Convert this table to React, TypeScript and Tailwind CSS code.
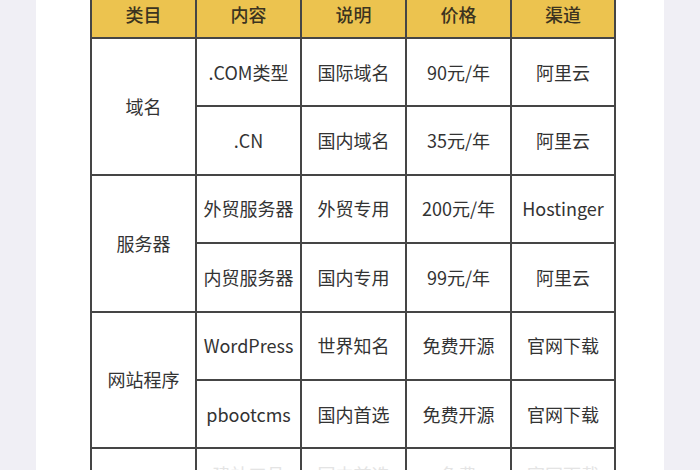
import React from "react";

const font = { fontFamily: '"Noto Sans CJK SC", "Noto Sans", sans-serif' };

function Cell({ children, className = "" }: { children?: React.ReactNode; className?: string }) {
  return (
    <div className={`bg-white flex items-center justify-center text-[18px] text-[#333] ${className}`}>
      {children}
    </div>
  );
}

function Head({ children }: { children: React.ReactNode }) {
  return (
    <div className="bg-[#ecc34f] flex items-center justify-center text-[18px] font-medium text-[#3b3320] h-[37px] pb-[8px]">
      {children}
    </div>
  );
}

export default function App() {
  const rows: [string, string, string, string][] = [
    [".COM类型", "国际域名", "90元/年", "阿里云"],
    [".CN", "国内域名", "35元/年", "阿里云"],
    ["外贸服务器", "外贸专用", "200元/年", "Hostinger"],
    ["内贸服务器", "国内专用", "99元/年", "阿里云"],
    ["WordPress", "世界知名", "免费开源", "官网下载"],
    ["pbootcms", "国内首选", "免费开源", "官网下载"],
  ];
  const cats = ["域名", "服务器", "网站程序"];
  return (
    <div className="w-[700px] h-[470px] overflow-hidden bg-[#f0eff5] flex" style={font}>
      <div className="w-[36px] shrink-0" />
      <div className="w-[628px] h-full bg-white pl-[54px]">
        <div className="w-[526px] bg-[#454545] px-[2px] grid grid-cols-[103px_103px_103px_103px_102px] gap-x-[2px] gap-y-[2px] auto-rows-[66.4px] [grid-template-rows:37px_repeat(7,66.4px)]">
          <Head>类目</Head>
          <Head>内容</Head>
          <Head>说明</Head>
          <Head>价格</Head>
          <Head>渠道</Head>
          {cats.map((c, ci) => (
            <React.Fragment key={c}>
              <Cell className="row-span-2">{c}</Cell>
              {rows.slice(ci * 2, ci * 2 + 2).map((r, ri) => (
                <React.Fragment key={ri}>
                  {ri === 1 ? null : null}
                  <Cell className={ri === 1 ? "col-start-2" : ""}>{r[0]}</Cell>
                  <Cell>{r[1]}</Cell>
                  <Cell>{r[2]}</Cell>
                  <Cell>{r[3]}</Cell>
                </React.Fragment>
              ))}
            </React.Fragment>
          ))}
          <Cell className="items-start pt-[12px] text-[#e6e6e6]"> </Cell>
          <Cell className="items-start pt-[12px] !text-[#e4e4e4]">建站工具</Cell>
          <Cell className="items-start pt-[12px] !text-[#e4e4e4]">国内首选</Cell>
          <Cell className="items-start pt-[12px] !text-[#e4e4e4]">免费</Cell>
          <Cell className="items-start pt-[12px] !text-[#e4e4e4]">官网下载</Cell>
        </div>
      </div>
      <div className="flex-1" />
    </div>
  );
}
